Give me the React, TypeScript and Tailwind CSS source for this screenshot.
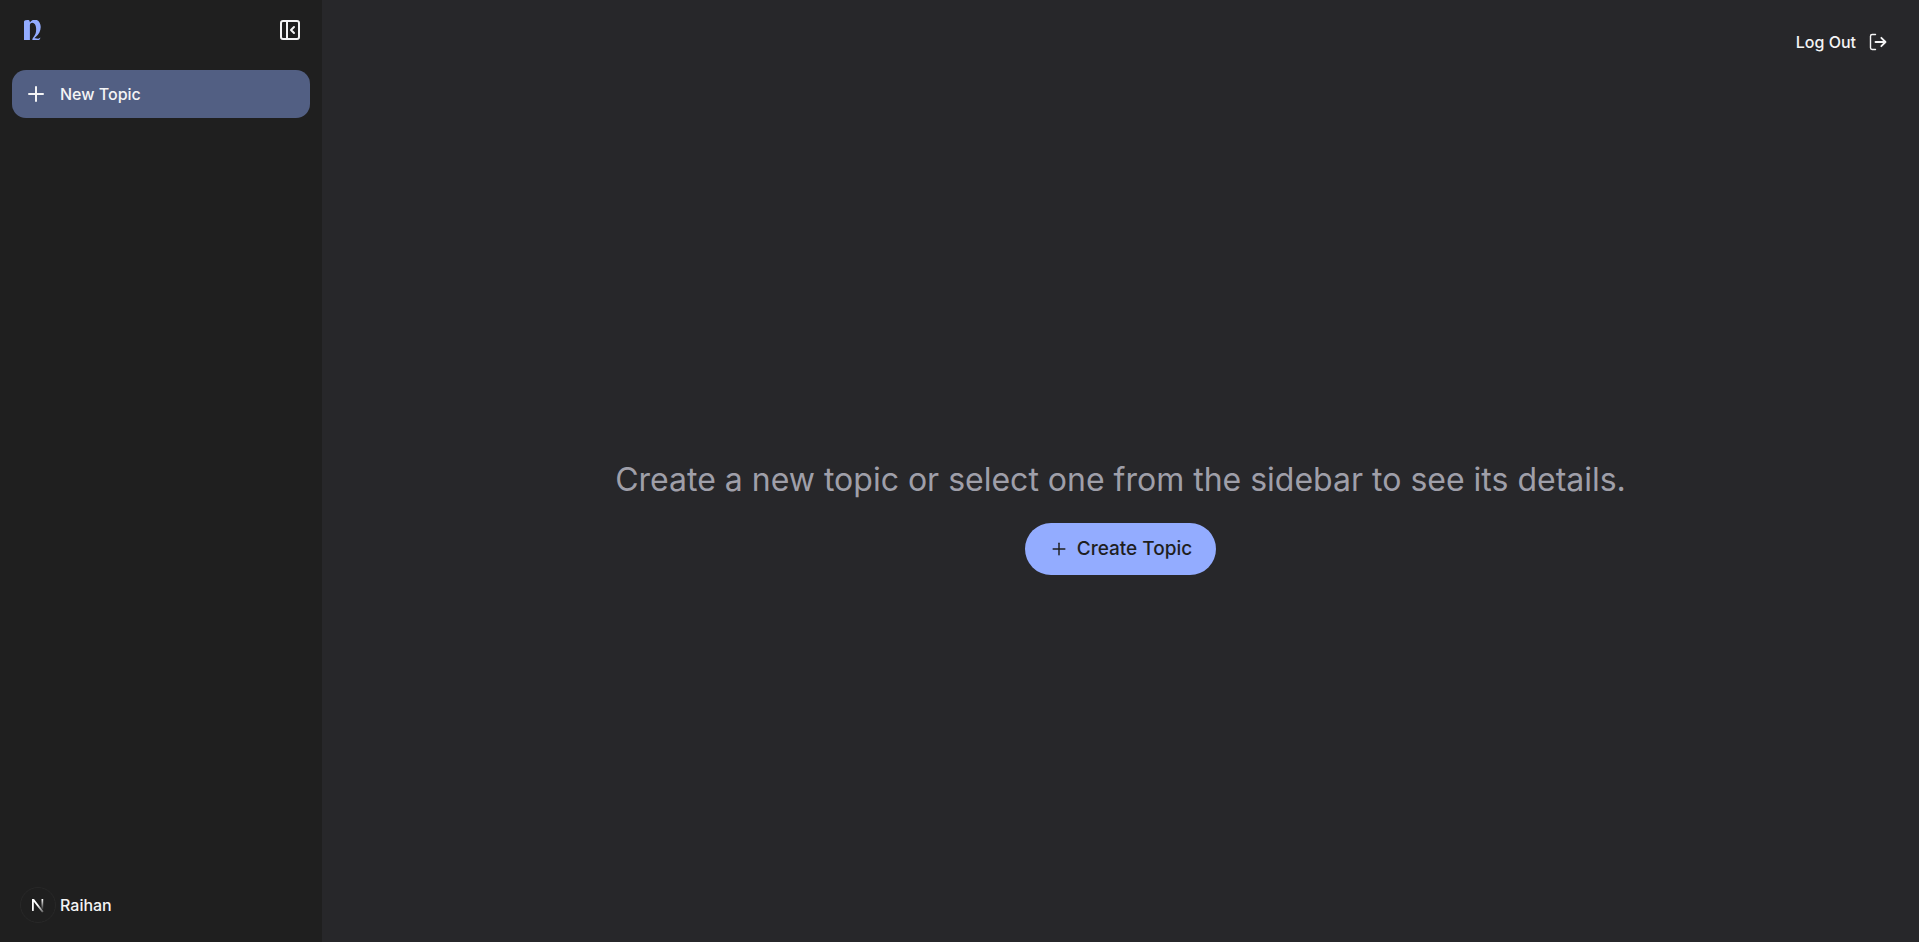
import React from 'react';
import { PanelLeftClose, Plus } from 'lucide-react';

function BrandMark() {
  return (
    <svg viewBox="0.5 0.5 18 20" className="h-5 w-[18px]" fill="#93acff" aria-hidden="true">
      <path d="M0.3 3.1C0.3 1.3 1.5 0.6 2.7 0.8C3.4 0 4.4 0 5.2 0.6C6.2 1.2 6.4 2.2 6.4 3C7.6 1 9.4 0.2 11.2 0.1C14.8 0 17.2 3.4 17.2 7.6C17.2 11.6 15.4 14.8 12.4 17.2C11.7 17.8 11.2 18.4 11 18.8C12.4 18.3 13.4 19.2 14.6 19.2C15.6 19.2 16.2 18.8 16.6 18.1L16.8 18.3C16.7 19.9 15.8 20.6 14 20.6C12.2 20.6 11.4 20.1 8.8 20.6C8.8 19.2 9.6 18.1 10.6 16.8C12.2 14.6 12.8 11.8 12.6 8.8C12.4 5.6 11 3.4 8.8 3.3C7.6 3.3 6.6 4.1 6.4 5.6V20.6H0.3Z" />
    </svg>
  );
}

function Avatar() {
  return (
    <svg viewBox="0 0 36 36" className="size-9 shrink-0" fill="none" aria-hidden="true">
      <defs>
        <linearGradient id="stem" x1="0" y1="12" x2="0" y2="23" gradientUnits="userSpaceOnUse">
          <stop stopColor="#fff" />
          <stop offset="1" stopColor="#fff" stopOpacity="0" />
        </linearGradient>
        <linearGradient id="diagonal" x1="18" y1="18" x2="24" y2="26" gradientUnits="userSpaceOnUse">
          <stop stopColor="#fff" />
          <stop offset="1" stopColor="#fff" stopOpacity="0.2" />
        </linearGradient>
      </defs>
      <circle cx="18" cy="18" r="17.5" stroke="#282828" />
      <path d="M12 24V12h2l9.6 12.4-1.5 1.1L13.8 14.7V24Z" fill="url(#diagonal)" />
      <path d="M21.5 12H23.2v10h-1.7Z" fill="url(#stem)" />
    </svg>
  );
}

function LogOutIcon() {
  return (
    <svg
      viewBox="0 0 24 24"
      className="size-5"
      fill="none"
      stroke="currentColor"
      strokeLinecap="round"
      strokeLinejoin="round"
      aria-hidden="true"
    >
      <path d="M9 21H5a2 2 0 0 1-2-2V5a2 2 0 0 1 2-2h4" strokeWidth="1.7" />
      <path d="m16 17 5-5-5-5M21 12H9" strokeWidth="2.2" />
    </svg>
  );
}

function Sidebar() {
  return (
    <aside className="flex w-[322px] shrink-0 flex-col bg-[#1f1f1f] px-3">
      <div className="flex h-[70px] items-start justify-between px-2 pt-[18px]">
        <a href="#" aria-label="Home" className="flex h-6 items-center pl-1">
          <BrandMark />
        </a>
        <button type="button" aria-label="Collapse sidebar">
          <PanelLeftClose size={24} />
        </button>
      </div>

      <button
        type="button"
        className="flex h-12 items-center gap-3 rounded-[14px] bg-[#525f83] px-3 text-base font-medium"
      >
        <Plus size={24} />
        New Topic
      </button>

      <div className="mt-auto flex items-center gap-1 px-2 pb-[19px] text-base font-medium">
        <Avatar />
        <span>Raihan</span>
      </div>
    </aside>
  );
}

function EmptyTopic() {
  return (
    <section className="flex flex-1 flex-col items-center justify-center">
      <p className="mb-3.5 text-center text-[32px] leading-[58px] text-zinc-400">
        Create a new topic or select one from the sidebar to see its details.
      </p>
      <button
        type="button"
        className="flex h-[52px] items-center gap-2 rounded-full bg-[#93acff] px-6 text-[19px] font-medium text-[#1f1f1f]"
      >
        <Plus size={20} strokeWidth={1.75} />
        Create Topic
      </button>
    </section>
  );
}

export default function App() {
  return (
    <div className="flex h-[calc(100vh-3px)] bg-[#27272a] font-['Inter',sans-serif] text-zinc-100">
      <Sidebar />
      <main className="flex min-w-0 flex-1 flex-col">
        <header className="flex h-[84px] items-center justify-end px-[31px]">
          <button type="button" className="flex items-center gap-3 text-base font-medium">
            Log Out
            <LogOutIcon />
          </button>
        </header>
        <EmptyTopic />
      </main>
    </div>
  );
}
